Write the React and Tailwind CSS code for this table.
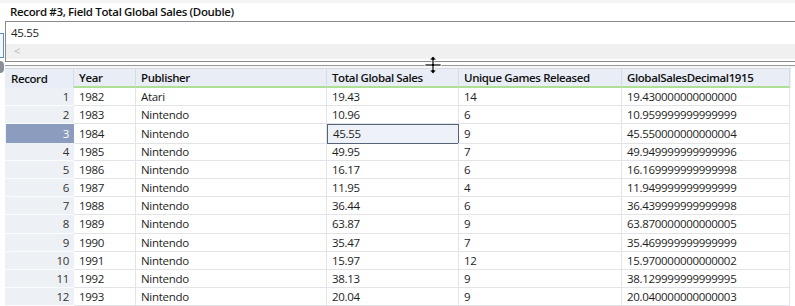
import React from "react";

const rows = [
  [1, "1982", "Atari", "19.43", "14", "19.430000000000000"],
  [2, "1983", "Nintendo", "10.96", "6", "10.959999999999999"],
  [3, "1984", "Nintendo", "45.55", "9", "45.550000000000004"],
  [4, "1985", "Nintendo", "49.95", "7", "49.949999999999996"],
  [5, "1986", "Nintendo", "16.17", "6", "16.169999999999998"],
  [6, "1987", "Nintendo", "11.95", "4", "11.949999999999999"],
  [7, "1988", "Nintendo", "36.44", "6", "36.439999999999998"],
  [8, "1989", "Nintendo", "63.87", "9", "63.870000000000005"],
  [9, "1990", "Nintendo", "35.47", "7", "35.469999999999999"],
  [10, "1991", "Nintendo", "15.97", "12", "15.970000000000002"],
  [11, "1992", "Nintendo", "38.13", "9", "38.129999999999995"],
  [12, "1993", "Nintendo", "20.04", "9", "20.040000000000003"],
];

const cols = "grid grid-cols-[69px_62px_191px_132px_163px_168px]";

function ResizeCursor() {
  return (
    <svg width="20" height="20" viewBox="0 0 20 20" className="absolute left-[423px] top-[55px]">
      <path d="M10 1 L13.5 5 L11 5 L11 9 L18 9 L18 11 L11 11 L11 15 L13.5 15 L10 19 L6.5 15 L9 15 L9 11 L2 11 L2 9 L9 9 L9 5 L6.5 5 Z" fill="#000" stroke="#fff" strokeWidth="0.8" />
    </svg>
  );
}

export default function App() {
  return (
    <div className="relative w-[795px] h-[306px] overflow-hidden bg-white text-[11.5px] tracking-[-0.3px] text-[#1e1e1e]" style={{ fontFamily: '"Open Sans", "Noto Sans", sans-serif' }}>
      <div className="h-[3px] bg-[#f4f4f4]" />
      <div className="h-[18px] pl-[10px] flex items-center font-semibold text-[#111] tracking-[-0.35px]">
        Record #3, Field Total Global Sales (Double)
      </div>
      <div className="ml-[5px] h-[41px] border border-r-0 border-[#8a8a8a] flex flex-col">
        <div className="h-[22px] pl-[5px] flex items-center">45.55</div>
        <div className="h-[15px] bg-[#f0f0f0] flex items-center pl-[8px] text-[#b8b8b8] text-[11px]">&lt;</div>
      </div>
      <div className="h-[3px]" />
      <div className="h-px bg-[#9a9a9a] ml-[5px]" />
      <div className="h-[2px] bg-[#f6f6f6]" />
      <div className="ml-[5px] mr-[4px]">
        <div className={`${cols} h-[20px] bg-[#e8edf6] font-semibold text-[#111] border-t border-[#d6dbe4] tracking-[-0.4px]`}>
          {["Record", "Year", "Publisher", "Total Global Sales", "Unique Games Released", "GlobalSalesDecimal1915"].map((h, i) => (
            <div key={h} className={`flex items-center pl-[5px] border-r border-[#d6dbe4] ${i === 0 ? "pl-[6px]" : "border-b-2 border-b-[#addf95]"}`}>
              {h}
            </div>
          ))}
        </div>
        {rows.map((r) => {
          const sel = r[0] === 3;
          return (
            <div key={r[0]} className={`${cols} h-[18.2px]`}>
              <div className="flex items-center border-b border-[#fbfcfd] bg-[#edf0f5] pl-px">
                <div className={`flex-1 h-full flex items-center justify-end pr-[5px] ${sel ? "bg-[#8b9cbe] text-white" : "text-[#333]"}`}>
                  {r[0]}
                </div>
              </div>
              {r.slice(1).map((c, i) => (
                <div
                  key={i}
                  className={`flex items-center pl-[5px] border-b border-r ${
                    sel && i === 2 ? "border border-[#56647a] bg-[#eef1f8]" : "border-[#e2e4e8]"
                  }`}
                >
                  {c}
                </div>
              ))}
            </div>
          );
        })}
      </div>
      <div className="absolute left-0 top-[33px] w-[4px] h-[25px] border-r border-t border-b border-[#5b8fc9] bg-[#f4f6f8]" />
      <div className="absolute left-[-4px] top-[61px] w-[8px] h-[12px] rounded-full bg-[#8a8f98]" />
      <ResizeCursor />
    </div>
  );
}
